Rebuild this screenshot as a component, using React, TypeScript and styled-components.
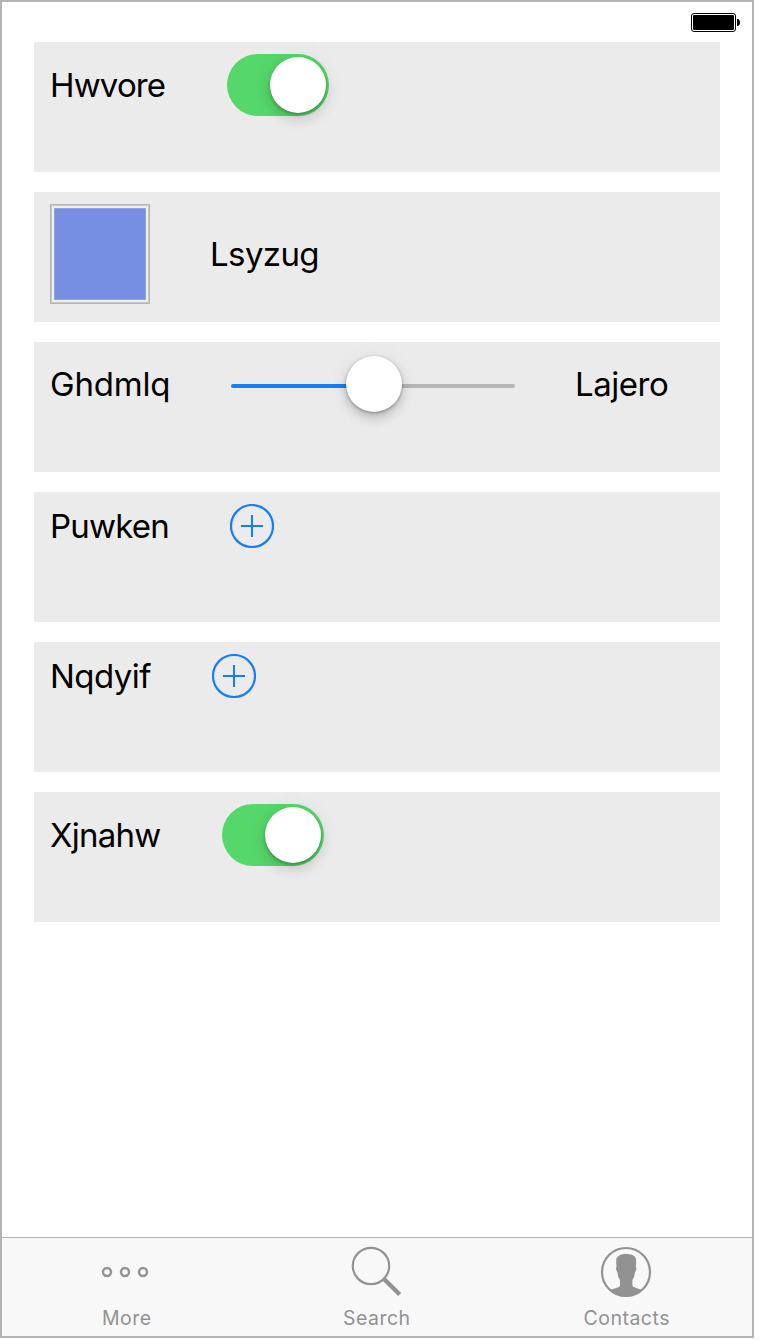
import React from "react";
import styled, { createGlobalStyle } from "styled-components";

const GlobalStyle = createGlobalStyle`
  * { box-sizing: border-box; }
  body { margin: 0; background: #fff; font-family: Inter, "Liberation Sans", sans-serif; }
`;

const Screen = styled.main`
  width: 754px;
  height: 1338px;
  border: 2px solid #b3b3b3;
  background: #fff;
  display: flex;
  flex-direction: column;
`;

const StatusBar = styled.header`
  height: 40px;
  flex: none;
  display: flex;
  justify-content: flex-end;
  padding: 11px 12px 0 0;
`;

const Rows = styled.section`
  flex: 1;
  display: flex;
  flex-direction: column;
  gap: 20px;
  padding: 0 32px;
`;

const Row = styled.div`
  height: 130px;
  background: #ebebeb;
  padding: 12px 16px;
  display: flex;
  align-items: flex-start;
`;

const RowContent = styled.div`
  display: flex;
  align-items: center;
  gap: 60px;
`;

const Label = styled.span<{ $width: number; $spacing: number }>`
  width: ${(p) => p.$width}px;
  font-size: 33px;
  line-height: 40px;
  letter-spacing: ${(p) => p.$spacing}px;
  white-space: nowrap;
  color: #000;
`;

const Toggle = styled.button`
  width: 102px;
  height: 62px;
  border: 0;
  border-radius: 31px;
  padding: 3px;
  background: #55d869;
  display: flex;
  justify-content: flex-end;
`;

const Knob = styled.span`
  width: 56px;
  height: 56px;
  flex: none;
  border-radius: 50%;
  background: #fff;
  box-shadow: 0 6px 14px rgba(0, 0, 0, 0.15), 0 2px 3px rgba(0, 0, 0, 0.22), 0 0 24px rgba(0, 0, 0, 0.05);
`;

const SliderKnob = styled(Knob)`
  margin: 0 -28px;
  z-index: 1;
  box-shadow: 0 6px 12px rgba(0, 0, 0, 0.2), 0 1px 3px rgba(0, 0, 0, 0.34), 0 0 24px rgba(0, 0, 0, 0.04);
`;

const Swatch = styled.div`
  width: 100px;
  height: 100px;
  border: 1px solid #b5b5b3;
  padding: 3px;
  background: #f0f0ef;
  box-shadow: inset 0 0 0 1px #c6c6c4;
`;

const SwatchColor = styled.div`
  height: 92px;
  background: #768fe2;
  border: 1px solid #91a5e6;
`;

const Slider = styled.div`
  width: 284px;
  height: 60px;
  display: flex;
  align-items: center;
`;

const Track = styled.span<{ $width: number; $filled?: boolean }>`
  width: ${(p) => p.$width}px;
  height: 4px;
  margin-top: 4px;
  border-radius: 2px;
  background: ${(p) => (p.$filled ? "#157efb" : "#b7b7b7")};
`;

const IconButton = styled.button`
  border: 0;
  padding: 0;
  background: none;
  display: flex;
`;

const TabBar = styled.nav`
  height: 99px;
  flex: none;
  border-top: 1px solid #b2b2b2;
  background: #f8f8f8;
  display: grid;
  grid-template-columns: repeat(3, 1fr);
`;

const Tab = styled.div`
  display: flex;
  flex-direction: column;
  align-items: center;
  padding: 8px 2px 0 0;
  color: #929292;
`;

const TabLabel = styled.span<{ $spacing: number }>`
  margin-top: 6px;
  padding-left: 1px;
  font-size: 19.5px;
  line-height: 28px;
  letter-spacing: ${(p) => p.$spacing}px;
  margin-right: -${(p) => p.$spacing}px;
`;

const BatteryIcon = () => (
  <svg width="49" height="20" viewBox="0 0 49 20">
    <rect x="0.5" y="0.5" width="44" height="18" rx="2.5" fill="#fff" stroke="#000" />
    <rect x="2" y="2" width="41" height="15" rx="1" />
    <path d="M46 6h1c1.3.5 2 1.800 2 3.500s-.7 3-2 3.500h-1z" />
  </svg>
);

const AddIcon = () => (
  <svg width="44" height="44" viewBox="0 0 44 44" fill="none" stroke="#157efb" strokeWidth="2">
    <circle cx="22" cy="22" r="21" strokeWidth="2.2" />
    <path d="M11 22h22M22 11v22" />
  </svg>
);

const MoreIcon = () => (
  <svg width="52" height="52" viewBox="0 0 52 52" fill="none" stroke="currentColor" strokeWidth="2.4">
    <circle cx="7" cy="26" r="4" />
    <circle cx="25" cy="26" r="4" />
    <circle cx="43" cy="26" r="4" />
  </svg>
);

const SearchIcon = () => (
  <svg width="52" height="52" viewBox="0 0 52 52" fill="none" stroke="currentColor">
    <circle cx="21" cy="20" r="18.200" strokeWidth="2.2" />
    <path d="M33.500 32.500L49.700 48.500" strokeWidth="4.4" />
  </svg>
);

const ContactsIcon = () => (
  <svg width="52" height="52" viewBox="0 0 52 52">
    <circle cx="26" cy="26" r="24" fill="none" stroke="currentColor" strokeWidth="2.2" />
    <path
      fill="currentColor"
      d="M16.200 14.500C16.200 10.500 20 8 26 8s10.200 2 10.200 6.500c0 2.500-.2 4.500-.4 6.500 1 .3.600 3.500-.9 5.500-.3 3-1 5.500-2.500 7.500v5c0 3 5 3 9.500 4.700A24 24 0 0 1 10.500 43.700c4.500-1.700 9.500-1.700 9.500-4.700v-5c-1.500-2-2.200-4.500-2.500-7.500-1.500-2-1.900-5.200-.9-5.500-.3-2-.4-4-.4-6.500z"
    />
  </svg>
);

const Switch = () => (
  <Toggle role="switch" aria-checked="true">
    <Knob />
  </Toggle>
);

export default function App() {
  return (
    <>
      <GlobalStyle />
      <Screen>
        <StatusBar>
          <BatteryIcon />
        </StatusBar>
        <Rows>
          <Row>
            <RowContent>
              <Label $width={117} $spacing={-0.85}>Hwvore</Label>
              <Switch />
            </RowContent>
          </Row>
          <Row>
            <RowContent>
              <Swatch>
                <SwatchColor />
              </Swatch>
              <Label $width={110} $spacing={-0.6}>Lsyzug</Label>
            </RowContent>
          </Row>
          <Row>
            <RowContent>
              <Label $width={121} $spacing={-0.2}>Ghdmlq</Label>
              <Slider>
                <Track $width={143} $filled />
                <SliderKnob />
                <Track $width={141} />
              </Slider>
              <Label $width={95} $spacing={-0.45}>Lajero</Label>
            </RowContent>
          </Row>
          <Row>
            <RowContent>
              <Label $width={120} $spacing={-0.8}>Puwken</Label>
              <IconButton aria-label="Add">
                <AddIcon />
              </IconButton>
            </RowContent>
          </Row>
          <Row>
            <RowContent>
              <Label $width={102} $spacing={-0.55}>Nqdyif</Label>
              <IconButton aria-label="Add">
                <AddIcon />
              </IconButton>
            </RowContent>
          </Row>
          <Row>
            <RowContent>
              <Label $width={112} $spacing={-0.75}>Xjnahw</Label>
              <Switch />
            </RowContent>
          </Row>
        </Rows>
        <TabBar>
          <Tab>
            <MoreIcon />
            <TabLabel $spacing={0.5}>More</TabLabel>
          </Tab>
          <Tab>
            <SearchIcon />
            <TabLabel $spacing={0.5}>Search</TabLabel>
          </Tab>
          <Tab>
            <ContactsIcon />
            <TabLabel $spacing={0.5}>Contacts</TabLabel>
          </Tab>
        </TabBar>
      </Screen>
    </>
  );
}
